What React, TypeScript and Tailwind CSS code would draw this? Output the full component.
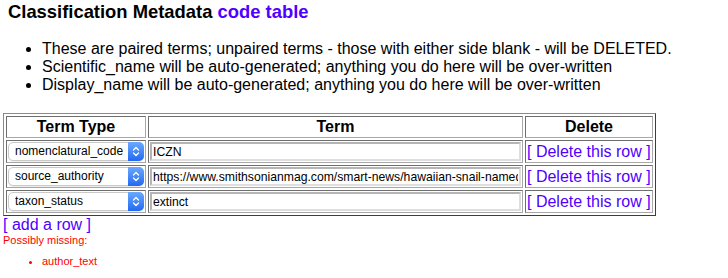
import React from "react";

type Row = { type: string; value: string };

const rows: Row[] = [
  { type: "nomenclatural_code", value: "ICZN" },
  {
    type: "source_authority",
    value: "https://www.smithsonianmag.com/smart-news/hawaiian-snail-named-george-dies-180971224/",
  },
  { type: "taxon_status", value: "extinct" },
];

const typeOptions = ["nomenclatural_code", "source_authority", "taxon_status", "author_text"];

function MacSelect({ value }: { value: string }) {
  return (
    <span className="relative block w-[136px] h-[19px]">
      <select
        defaultValue={value}
        className="block w-full h-full appearance-none rounded-[5px] border border-[#c9c9c9] bg-white pl-[6px] pr-[16px] text-[12px] leading-[17px] text-black shadow-[0_1px_1px_rgba(0,0,0,0.08)] outline-none"
      >
        {typeOptions.map((o) => (
          <option key={o} value={o}>
            {o}
          </option>
        ))}
      </select>
      {/* blue stepper button */}
      <span className="pointer-events-none absolute right-0 top-0 flex h-[19px] w-[16px] items-center justify-center rounded-r-[5px] bg-gradient-to-b from-[#6ba8ff] to-[#2268f2]">
        <svg width="8" height="11" viewBox="0 0 8 11" fill="none">
          <path d="M1.5 4 L4 1.5 L6.5 4" stroke="white" strokeWidth="1.3" strokeLinecap="round" strokeLinejoin="round" />
          <path d="M1.5 7 L4 9.5 L6.5 7" stroke="white" strokeWidth="1.3" strokeLinecap="round" strokeLinejoin="round" />
        </svg>
      </span>
    </span>
  );
}

const cell =
  "border border-t-[#6e6e6e] border-l-[#6e6e6e] border-b-[#a8a8a8] border-r-[#a8a8a8] p-[1px]";

export default function App() {
  return (
    <div className="w-[728px] h-[278px] bg-white text-black px-[3px] pt-[1px] font-['Liberation_Sans',Arial,sans-serif]">
      <h3 className="ml-[5px] text-[18.4px] font-bold leading-[22px]">
        Classification Metadata <a className="text-[#4f00ff] cursor-pointer">code table</a>
      </h3>

      <ul className="mt-[17px] ml-[5px] list-disc pl-[34px] text-[16px] leading-[18px]">
        <li>These are paired terms; unpaired terms - those with either side blank - will be DELETED.</li>
        <li>Scientific_name will be auto-generated; anything you do here will be over-written</li>
        <li>Display_name will be auto-generated; anything you do here will be over-written</li>
      </ul>

      <table className="mt-[19px] w-[653px] border-separate border-spacing-[2px] border border-t-[#8a8a8a] border-l-[#8a8a8a] border-b-[#3c3c3c] border-r-[#3c3c3c]">
        <thead>
          <tr>
            <th className={`${cell} w-[140px] h-[22px] text-[16px] leading-[18px] font-bold`}>Term Type</th>
            <th className={`${cell} text-[16px] leading-[18px] font-bold`}>Term</th>
            <th className={`${cell} w-[128px] text-[16px] leading-[18px] font-bold`}>Delete</th>
          </tr>
        </thead>
        <tbody>
          {rows.map((r) => (
            <tr key={r.type}>
              <td className={`${cell} h-[22px] align-middle`}>
                <MacSelect value={r.type} />
              </td>
              <td className={`${cell} align-middle`}>
                <input
                  type="text"
                  defaultValue={r.value}
                  className="block w-[371px] h-[19px] border-2 border-t-[#b5b5b5] border-l-[#b5b5b5] border-b-[#dedede] border-r-[#dedede] bg-white px-[1px] text-[12.2px] leading-[15px] text-black outline-none"
                />
              </td>
              <td className={`${cell} align-middle whitespace-nowrap text-[16px] leading-[18px]`}>
                <a className="text-[#4f00ff] cursor-pointer">[ Delete this row ]</a>
              </td>
            </tr>
          ))}
        </tbody>
      </table>

      <div className="text-[16px] leading-[18px]">
        <a className="text-[#4f00ff] cursor-pointer">[ add a row ]</a>
      </div>

      <div className="text-[11px] leading-[13px] text-[#ff0000]">Possibly missing:</div>
      <ul className="mt-[8px] list-disc pl-[39px] text-[11px] leading-[13px] text-[#ff0000]">
        <li>author_text</li>
      </ul>
    </div>
  );
}
